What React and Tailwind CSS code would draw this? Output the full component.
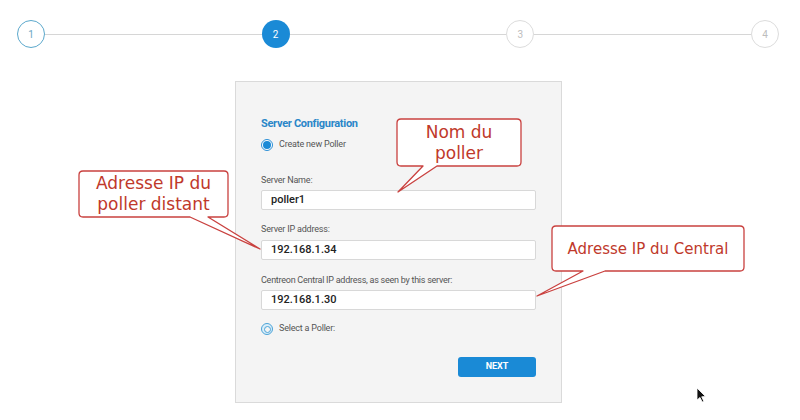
import React from "react";

function calloutPath(x1, y1, x2, y2, bx1, bx2, tx, ty, r = 4) {
  return `M${x1 + r},${y1} H${x2 - r} Q${x2},${y1} ${x2},${y1 + r} V${y2 - r} Q${x2},${y2} ${x2 - r},${y2} H${bx2} L${tx},${ty} L${bx1},${y2} H${x1 + r} Q${x1},${y2} ${x1},${y2 - r} V${y1 + r} Q${x1},${y1} ${x1 + r},${y1} Z`;
}

function Step({ n, state }) {
  if (state === "active")
    return (
      <div className="w-[28px] h-[28px] rounded-full bg-[#1a8ad6] flex items-center justify-center text-white text-[10px] shrink-0">
        {n}
      </div>
    );
  if (state === "done")
    return (
      <div className="w-[28px] h-[28px] rounded-full border-[1.5px] border-[#5ba8cc] bg-white flex items-center justify-center text-[#6aa6c4] text-[10px] shrink-0">
        {n}
      </div>
    );
  return (
    <div className="w-[28px] h-[28px] rounded-full border-[1.5px] border-[#dcdcdc] bg-white flex items-center justify-center text-[#bdbdbd] text-[10px] shrink-0">
      {n}
    </div>
  );
}

export default function App() {
  return (
    <div
      className="relative w-[800px] h-[420px] bg-white overflow-hidden"
      style={{ fontFamily: "Roboto, 'Liberation Sans', sans-serif" }}
    >
      {/* Stepper */}
      <div className="flex items-center pl-[17px] pr-[21px] pt-[20px]">
        <Step n="1" state="done" />
        <div className="flex-1 h-[1px] bg-[#d6d6d6]" />
        <Step n="2" state="active" />
        <div className="flex-1 h-[1px] bg-[#d6d6d6]" />
        <Step n="3" state="todo" />
        <div className="flex-1 h-[1px] bg-[#d6d6d6]" />
        <Step n="4" state="todo" />
      </div>

      {/* Card */}
      <div className="ml-[235px] mt-[33px] w-[327px] h-[322px] bg-[#f4f4f4] border border-[#dadada] pl-[25px] pr-[25px] pt-[35px] flex flex-col">
        <div className="h-[14px] leading-[14px] text-[11px] font-bold text-[#2a86c8] tracking-[-0.3px]">
          Server Configuration
        </div>
        <div className="mt-[7px] h-[14px] flex items-center gap-[6px]">
          <div className="w-[12px] h-[12px] rounded-full border border-[#2a8fd6] bg-white flex items-center justify-center">
            <div className="w-[8px] h-[8px] rounded-full bg-[#1a8ad6]" />
          </div>
          <span className="text-[9px] text-[#555] tracking-[-0.2px]">Create new Poller</span>
        </div>

        <div className="mt-[22px] h-[12px] leading-[12px] text-[9px] text-[#555] tracking-[-0.2px]">Server Name:</div>
        <div className="mt-[4px] h-[20px] w-[275px] bg-white border border-[#d8d8d8] rounded-[2px] flex items-center pl-[9px] text-[11px] text-[#222] font-medium">
          poller1
        </div>

        <div className="mt-[13px] h-[12px] leading-[12px] text-[9px] text-[#555] tracking-[-0.2px]">Server IP address:</div>
        <div className="mt-[5px] h-[20px] w-[275px] bg-white border border-[#d8d8d8] rounded-[2px] flex items-center pl-[9px] text-[11px] text-[#222] font-medium">
          192.168.1.34
        </div>

        <div className="mt-[14px] h-[12px] leading-[12px] text-[9px] text-[#555] tracking-[-0.25px]">
          Centreon Central IP address, as seen by this server:
        </div>
        <div className="mt-[4px] h-[20px] w-[275px] bg-white border border-[#d8d8d8] rounded-[2px] flex items-center pl-[9px] text-[11px] text-[#222] font-medium">
          192.168.1.30
        </div>

        <div className="mt-[12px] h-[14px] flex items-center gap-[6px]">
          <div className="w-[12px] h-[12px] rounded-full border border-[#4aa3d8] bg-[#dbeef9] flex items-center justify-center">
            <div className="w-[7px] h-[7px] rounded-full border border-[#4aa3d8] bg-[#f4f4f4]" />
          </div>
          <span className="text-[9px] text-[#555] tracking-[-0.2px]">Select a Poller:</span>
        </div>

        <div className="mt-[21px] self-end w-[78px] h-[20px] rounded-[3px] bg-[#1a8ad6] flex items-center justify-center text-white text-[9px] font-bold">
          NEXT
        </div>
      </div>

      {/* Callout shapes */}
      <svg className="absolute left-0 top-0" width="800" height="420">
        <g fill="white" stroke="#c9413f" strokeWidth="1.3" strokeLinejoin="round">
          <path d={calloutPath(397, 119, 521, 166, 423, 437, 398, 192)} />
          <path d={calloutPath(79, 171, 228, 217, 190, 208, 260, 249)} />
          <path d={calloutPath(552, 226, 744, 271, 583, 605, 537, 296)} />
        </g>
        {/* cursor */}
        <path
          d="M697 388 L697 400 L700 397.5 L702.2 402 L703.8 401.2 L701.7 396.8 L705.5 396.5 Z"
          fill="#111"
          stroke="white"
          strokeWidth="0.8"
        />
      </svg>

      {/* Callout texts */}
      <div
        className="absolute left-[397px] top-[119px] w-[124px] h-[47px] flex flex-col items-center justify-center text-[#c0392b] text-[17px]"
        style={{ fontFamily: "'DejaVu Sans', sans-serif" }}
      >
        <div className="h-[21px] leading-[21px]">Nom du</div>
        <div className="h-[21px] leading-[21px]">poller</div>
      </div>
      <div
        className="absolute left-[79px] top-[171px] w-[149px] h-[46px] flex flex-col items-center justify-center text-[#c0392b] text-[17px]"
        style={{ fontFamily: "'DejaVu Sans', sans-serif" }}
      >
        <div className="h-[21px] leading-[21px]">Adresse IP du</div>
        <div className="h-[21px] leading-[21px]">poller distant</div>
      </div>
      <div
        className="absolute left-[552px] top-[226px] w-[192px] h-[45px] flex items-center justify-center text-[#c0392b] text-[15px]"
        style={{ fontFamily: "'DejaVu Sans', sans-serif" }}
      >
        <div className="h-[22px] leading-[22px]">Adresse IP du Central</div>
      </div>
    </div>
  );
}
